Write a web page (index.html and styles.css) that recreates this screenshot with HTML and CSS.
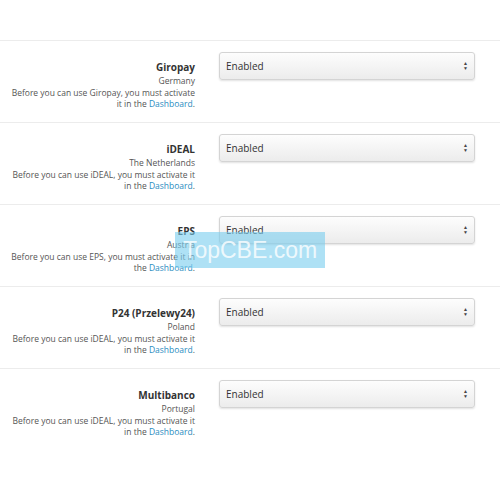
FILE: index.html
```html
<!DOCTYPE html>
<html>
<head>
<meta charset="utf-8">
<link rel="stylesheet" href="styles.css">
</head>
<body>
<div class="page">
  <div class="row">
    <div class="label">
      <div class="title">Giropay</div>
      <div class="desc">Germany<br>Before you can use Giropay, you must activate it in the <a href="#">Dashboard</a>.</div>
    </div>
    <div class="select"><span>Enabled</span><span class="arrows">&#9650;<br>&#9660;</span></div>
  </div>
  <div class="row">
    <div class="label">
      <div class="title">iDEAL</div>
      <div class="desc">The Netherlands<br>Before you can use iDEAL, you must activate it in the <a href="#">Dashboard</a>.</div>
    </div>
    <div class="select"><span>Enabled</span><span class="arrows">&#9650;<br>&#9660;</span></div>
  </div>
  <div class="row">
    <div class="label">
      <div class="title">EPS</div>
      <div class="desc">Austria<br>Before you can use EPS, you must activate it in the <a href="#">Dashboard</a>.</div>
    </div>
    <div class="select"><span>Enabled</span><span class="arrows">&#9650;<br>&#9660;</span></div>
  </div>
  <div class="row">
    <div class="label">
      <div class="title">P24 (Przelewy24)</div>
      <div class="desc">Poland<br>Before you can use iDEAL, you must activate it in the <a href="#">Dashboard</a>.</div>
    </div>
    <div class="select"><span>Enabled</span><span class="arrows">&#9650;<br>&#9660;</span></div>
  </div>
  <div class="row">
    <div class="label">
      <div class="title">Multibanco</div>
      <div class="desc">Portugal<br>Before you can use iDEAL, you must activate it in the <a href="#">Dashboard</a>.</div>
    </div>
    <div class="select"><span>Enabled</span><span class="arrows">&#9650;<br>&#9660;</span></div>
  </div>
  <div class="watermark">TopCBE.com</div>
</div>
</body>
</html>
```

FILE: styles.css
```css
html, body {
  margin: 0;
  padding: 0;
  background: #fff;
}
.page {
  position: relative;
  padding-top: 40px;
  font-family: "Open Sans", "Noto Sans", sans-serif;
}
.row {
  display: flex;
  gap: 24px;
  border-top: 1px solid #ececec;
  height: 70px;
  padding-top: 11px;
  box-sizing: content-box;
}
.label {
  width: 186px;
  padding-left: 9px;
  text-align: right;
  box-sizing: content-box;
  margin-top: 8px;
}
.title {
  font-size: 10px;
  font-weight: 700;
  color: #333;
  line-height: 15px;
}
.desc {
  font-size: 8.5px;
  line-height: 11.5px;
  color: #555;
}
.desc a {
  color: #2a8dbf;
  text-decoration: none;
}
.select {
  width: 256px;
  height: 28px;
  box-sizing: border-box;
  border: 1px solid #d4d4d4;
  border-radius: 3px;
  background: linear-gradient(#fdfdfd, #ececec);
  box-shadow: 0 1px 2px rgba(0,0,0,0.12);
  display: flex;
  align-items: center;
  justify-content: space-between;
  padding: 0 6px 0 6px;
  font-size: 10px;
  color: #333;
}
.arrows {
  font-size: 5px;
  line-height: 5px;
  color: #444;
  text-align: center;
}
.watermark {
  position: absolute;
  left: 175px;
  top: 232px;
  width: 150px;
  height: 36px;
  background: rgba(120, 205, 238, 0.6);
  color: rgba(255,255,255,0.8);
  font-family: "Liberation Sans", Arial, sans-serif;
  font-size: 23px;
  line-height: 36px;
  text-align: center;
}
```
